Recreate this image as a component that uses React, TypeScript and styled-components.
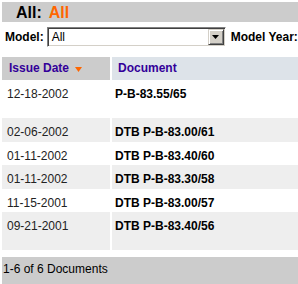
import React from "react";
import styled, { createGlobalStyle } from "styled-components";

const colors = {
  barGrey: "#cccccc",
  rowGrey: "#eeeeee",
  headBlue: "#dde3e9",
  linkBlue: "#330099",
  orange: "#ff6600",
  text: "#222222",
};

const documents = [
  { date: "12-18-2002", name: "P-B-83.55/65", tall: true },
  { date: "02-06-2002", name: "DTB P-B-83.00/61" },
  { date: "01-11-2002", name: "DTB P-B-83.40/60" },
  { date: "01-11-2002", name: "DTB P-B-83.30/58" },
  { date: "11-15-2001", name: "DTB P-B-83.00/57" },
  { date: "09-21-2001", name: "DTB P-B-83.40/56", tall: true },
];

export default function App() {
  return (
    <>
      <GlobalStyle />
      <Page>
        <TitleBar>
          All:<TitleValue>All</TitleValue>
        </TitleBar>

        <FilterRow>
          <Label>Model:</Label>
          <SelectBox>
            <SelectValue>All</SelectValue>
            <DropButton>
              <svg width="7" height="4" viewBox="0 0 7 4">
                <polygon points="0,0 7,0 3.5,4" fill="#000" />
              </svg>
            </DropButton>
          </SelectBox>
          <Label>Model Year:</Label>
        </FilterRow>

        <DocGrid>
          <HeadCell $bg={colors.barGrey} $pad={7}>
            Issue Date
            <SortArrow width="7" height="5" viewBox="0 0 7 5">
              <polygon points="0,0 7,0 3.5,5" fill={colors.orange} />
            </SortArrow>
          </HeadCell>
          <HeadCell $bg={colors.headBlue} $pad={6}>
            Document
          </HeadCell>

          {documents.map((doc, i) => (
            <React.Fragment key={doc.name}>
              <DateCell $shaded={i % 2 === 1} $tall={!!doc.tall}>
                {doc.date}
              </DateCell>
              <NameCell $shaded={i % 2 === 1} $tall={!!doc.tall}>
                {doc.name}
              </NameCell>
            </React.Fragment>
          ))}
        </DocGrid>

        <Footer>1-6 of 6 Documents</Footer>
      </Page>
    </>
  );
}

const GlobalStyle = createGlobalStyle`
  body {
    margin: 0;
    background: #fff;
    font-family: "Liberation Sans", Arial, sans-serif;
    font-size: 12px;
    color: ${colors.text};
    overflow: hidden;
  }
`;

const Page = styled.div`
  padding: 2px 0 0 2px;
  overflow: hidden;
`;

const TitleBar = styled.div`
  height: 20px;
  box-sizing: border-box;
  padding: 1px 0 0 14px;
  background: ${colors.barGrey};
  font-size: 16px;
  font-weight: bold;
  line-height: 19px;
  color: #000;
`;

const TitleValue = styled.span`
  margin-left: 7px;
  color: ${colors.orange};
`;

const FilterRow = styled.div`
  display: flex;
  align-items: center;
  height: 20px;
  margin-top: 5px;
  padding-left: 3px;
  overflow: hidden;
`;

const Label = styled.span`
  flex-shrink: 0;
  font-weight: bold;
  color: #000;
  line-height: 14px;
  white-space: nowrap;
`;

const SelectBox = styled.div`
  flex-shrink: 0;
  display: flex;
  align-items: center;
  justify-content: space-between;
  width: 179px;
  height: 20px;
  box-sizing: border-box;
  margin: 0 5px 0 3px;
  padding: 0 1px 0 3px;
  background: #fff;
  border: 1px solid;
  border-color: #808080 #ffffff #ffffff #808080;
  box-shadow: inset 1px 1px 0 #404040, inset -1px -1px 0 #d4d0c8;
`;

const SelectValue = styled.span`
  padding-left: 1px;
  line-height: 16px;
  color: #000;
`;

const DropButton = styled.div`
  display: flex;
  align-items: center;
  justify-content: center;
  width: 16px;
  height: 16px;
  box-sizing: border-box;
  background: #d4d0c8;
  border: 1px solid;
  border-color: #d4d0c8 #404040 #404040 #d4d0c8;
  box-shadow: inset 1px 1px 0 #ffffff, inset -1px -1px 0 #808080;
`;

const DocGrid = styled.div`
  display: grid;
  grid-template-columns: 108px 1fr;
  column-gap: 2px;
  margin-top: 10px;
`;

const HeadCell = styled.div<{ $bg: string; $pad: number }>`
  height: 23px;
  padding-left: ${(p) => p.$pad}px;
  background: ${(p) => p.$bg};
  color: ${colors.linkBlue};
  font-weight: bold;
  line-height: 23px;
  white-space: nowrap;
`;

const SortArrow = styled.svg`
  margin-left: 6px;
  vertical-align: baseline;
`;

const BodyCell = styled.div<{ $shaded: boolean; $tall: boolean }>`
  height: ${(p) => (p.$tall ? 38 : 23.5)}px;
  box-sizing: border-box;
  padding-top: 7px;
  background: ${(p) => (p.$shaded ? colors.rowGrey : "#fff")};
  line-height: 14px;
  white-space: nowrap;
`;

const DateCell = styled(BodyCell)`
  padding-left: 5px;
  color: ${colors.text};
`;

const NameCell = styled(BodyCell)`
  padding-left: 3px;
  font-weight: bold;
  color: #000;
`;

const Footer = styled.div`
  height: 30px;
  box-sizing: border-box;
  margin-top: 7px;
  padding: 5px 1px;
  background: ${colors.barGrey};
  color: #000;
  line-height: 14px;
`;
